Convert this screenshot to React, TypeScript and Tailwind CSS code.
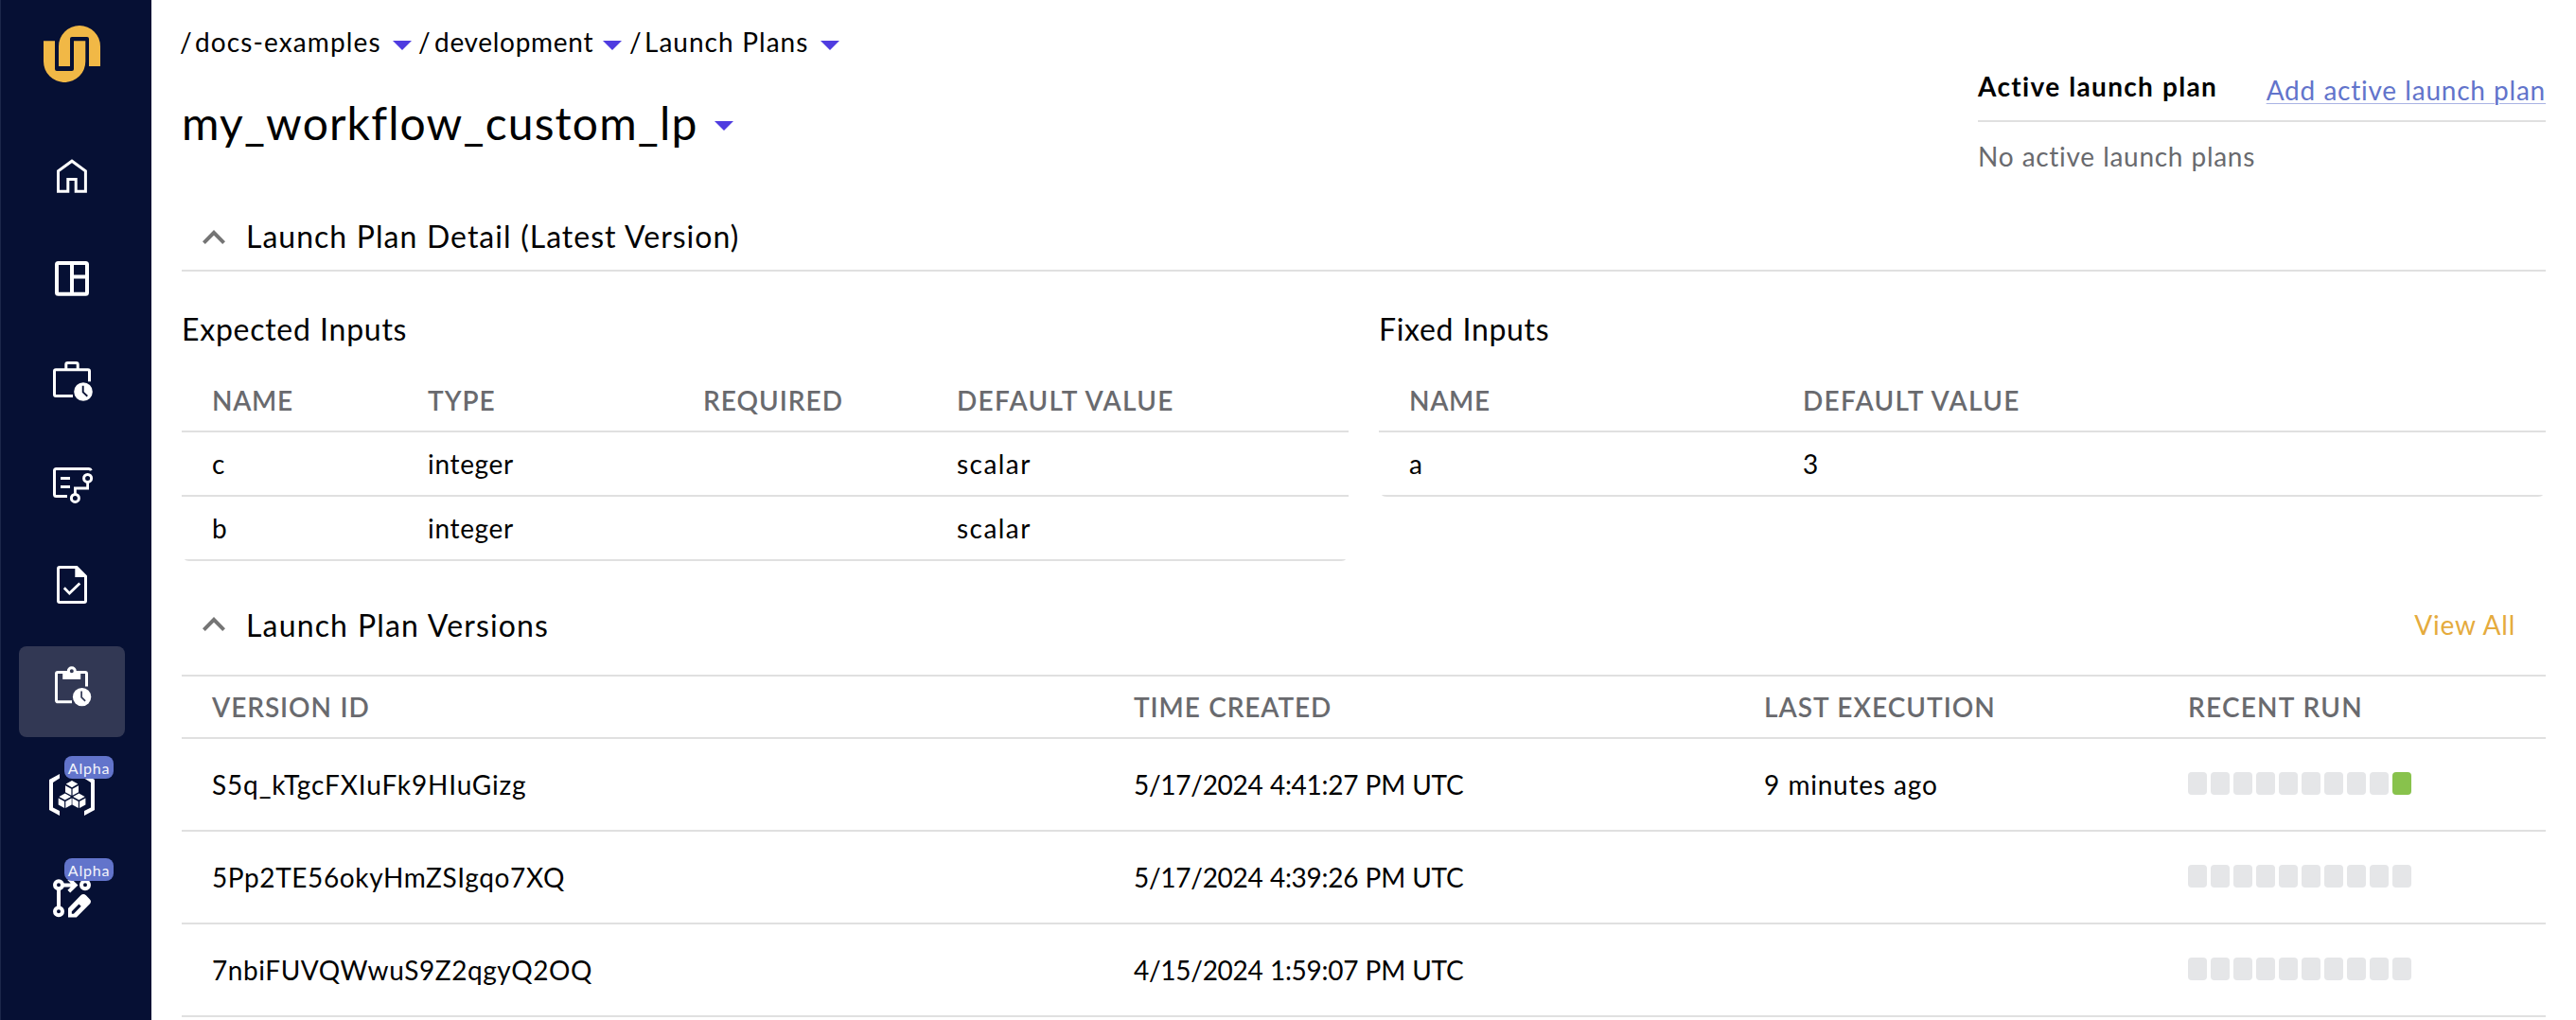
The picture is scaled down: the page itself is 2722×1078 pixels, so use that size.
import type { ReactNode } from "react";

function Logo() {
  return (
    <svg width="60" height="60" viewBox="0 0 60 60" fill="#f1b846">
      <path d="M16 43V22a22 22 0 0 1 44 0v21H48V14q0-2-2-2H30q-2 0-2 2v29z" />
      <path d="M0 16.3h12V46q0 2 2 2h16q2 0 2-2V16.3h12.3V38a22.1 22 0 0 1-44.3 0z" />
    </svg>
  );
}

const HomeIcon = (
  <path d="M41.5 59.2V37.8L56 27.2l14.4 10.6v21.4H60.2V46.5h-8.4v12.7z" strokeWidth="3" />
);

const DashboardIcon = (
  <>
    <rect x="40" y="27" width="32" height="32.7" rx="1.5" strokeWidth="4" />
    <path d="M56 27v32.7M56 41.6h16" strokeWidth="4" />
  </>
);

const BriefcaseIcon = (
  <>
    <path d="M57 59.5H39a1.5 1.5 0 0 1-1.5-1.5V33.3a1.5 1.5 0 0 1 1.5-1.5h34a1.5 1.5 0 0 1 1.5 1.5v11" strokeWidth="3" />
    <path d="M49.8 31.8v-5.6q0-1.7 1.7-1.7h9q1.7 0 1.7 1.7v5.6" strokeWidth="3" />
    <circle cx="68" cy="55" r="9.8" fill="#fff" stroke="none" />
    <path d="M67.7 48.8v6.6l4.6 4.3" stroke="#061034" strokeWidth="1.9" />
  </>
);

const WorkflowIcon = (
  <>
    <path d="M76.3 30.2q-.6-1.7-2.3-1.7H39.5q-2 0-2 2v25q0 2 2 2H51" strokeWidth="3" />
    <path d="M44 38.4h10M44 47.5h10" strokeWidth="3" />
    <circle cx="72.6" cy="38.4" r="4" strokeWidth="3" />
    <circle cx="59.4" cy="59.4" r="4" strokeWidth="3" />
    <path d="M72.6 43v6H59.4v6" strokeWidth="2.8" />
  </>
);

const TaskIcon = (
  <>
    <path d="M61 24.5H43a1.5 1.5 0 0 0-1.5 1.5v34a1.5 1.5 0 0 0 1.5 1.5h26a1.5 1.5 0 0 0 1.5-1.5V34z" strokeWidth="3" />
    <path d="M59.3 24v11h11.2v-2.5L62 24z" fill="#fff" stroke="none" />
    <path d="M47.8 46.2l5.6 5.9 10.9-10.6" strokeWidth="2.8" />
  </>
);

const LaunchPlanIcon = (
  <>
    <path d="M56 58.8H41a1.5 1.5 0 0 1-1.5-1.5V29a1.5 1.5 0 0 1 1.5-1.5h29a1.5 1.5 0 0 1 1.5 1.5v13.6" strokeWidth="3" />
    <path d="M46.2 26.5h19v8.4h-19z" fill="#fff" stroke="none" />
    <circle cx="55.8" cy="26.2" r="3.5" strokeWidth="3" fill="#323854" />
    <circle cx="66.6" cy="53.6" r="9.7" fill="#fff" stroke="none" />
    <path d="M66.1 47.6v6.2l4 4" stroke="#323854" strokeWidth="1.7" />
  </>
);

function Cube({ x, y }: { x: number; y: number }) {
  return (
    <g transform={`translate(${x} ${y})`}>
      <path d="M0 0l6.3 3.6L0 7.2l-6.3-3.6zM-7 5.2L-.6 8.7v7L-7 12.2zM7 5.2L.6 8.7v7L7 12.2z" />
    </g>
  );
}

const ArtifactsIcon = (
  <g fill="#fff" stroke="none">
    <path d="M43 27l-11 6v32l11 6v-5l-7-3.4V36l7-4.4zM69 27l11 6v32l-11 6v-5l7-3.4V36l-7-4.4z" />
    <Cube x={56} y={34} />
    <Cube x={48.7} y={47.4} />
    <Cube x={63.4} y={47.4} />
  </g>
);

const EditorIcon = (
  <>
    <g strokeWidth="4">
      <circle cx="42" cy="36.3" r="4" />
      <circle cx="70" cy="36.3" r="4" />
      <circle cx="42" cy="64.3" r="4" />
      <path d="M42 40v20M47 36.5h13M52.8 29.9l6.8 6.6-6.8 6.6" />
    </g>
    <path
      d="M52 61v9.4h8.8l13.9-13.9q2.6-2.6 0-5.2l-3.8-4q-2.8-2.6-5.6 0zM55.8 64.2l7.6-7.6 2.3 2.2-7.8 8h-2.1z"
      fill="#fff"
      fillRule="evenodd"
      stroke="none"
    />
  </>
);

const nav: { icon: ReactNode; active?: boolean; alpha?: boolean }[] = [
  { icon: HomeIcon },
  { icon: DashboardIcon },
  { icon: BriefcaseIcon },
  { icon: WorkflowIcon },
  { icon: TaskIcon },
  { icon: LaunchPlanIcon, active: true },
  { icon: ArtifactsIcon, alpha: true },
  { icon: EditorIcon, alpha: true },
];

function Sidebar() {
  return (
    <aside className="flex w-40 shrink-0 flex-col border-l border-[#1c274a] bg-[#061034] pt-[27px]">
      <div className="ml-[45px]">
        <Logo />
      </div>
      <nav className="mt-14 ml-[19px] flex w-28 flex-col gap-3">
        {nav.map((item, i) => (
          <div key={i} className={item.active ? "relative h-24 rounded-lg bg-[#323854]" : "relative h-24"}>
            <svg width="112" height="96" viewBox="0 0 112 96" fill="none" stroke="#fff">
              {item.icon}
            </svg>
            {item.alpha && (
              <span className="absolute top-2 left-12 h-6 w-[52px] rounded-lg bg-[#6274cb] text-center text-base leading-[26px] tracking-[0.05em] text-[#f3f4fb]">
                Alpha
              </span>
            )}
          </div>
        ))}
      </nav>
    </aside>
  );
}

function Caret({ className }: { className: string }) {
  return (
    <svg width="20" height="10" viewBox="0 0 20 10" fill="#4f3ce0" className={className}>
      <path d="M0 0h20L10 10z" />
    </svg>
  );
}

function Chevron() {
  return (
    <svg width="24" height="15" viewBox="0 0 24 15" fill="#757575" className="mr-[22px]">
      <path d="M12 0l12 12.2L21.2 15 12 5.8 2.8 15 0 12.2z" />
    </svg>
  );
}

function RecentRuns({ success }: { success: boolean }) {
  return (
    <div className="-mt-0.5 flex gap-1">
      {Array.from({ length: 10 }, (_, i) => (
        <span
          key={i}
          className={success && i === 9 ? "h-6 w-5 rounded bg-[#88c24c]" : "h-6 w-5 rounded bg-[#e5e6e8]"}
        />
      ))}
    </div>
  );
}

const expected = ["c", "b"];

const versions = [
  { id: "S5q_kTgcFXIuFk9HIuGizg", idClass: "tracking-[0.03em]", time: "5/17/2024 4:41:27 PM UTC", last: "9 minutes ago", success: true },
  { id: "5Pp2TE56okyHmZSIgqo7XQ", idClass: "tracking-[0.022em]", time: "5/17/2024 4:39:26 PM UTC", last: "", success: false },
  { id: "7nbiFUVQWwuS9Z2qgyQ2OQ", idClass: "tracking-[0.02em]", time: "4/15/2024 1:59:07 PM UTC", last: "", success: false },
];

const headRow = "border-b-2 border-[#e0e0e0] font-semibold text-[#696a6e]";
const expectedCols = "grid grid-cols-[228px_291px_268px_1fr] items-center pl-8";
const fixedCols = "grid grid-cols-[416px_1fr] items-center pl-8";
const versionCols = "grid grid-cols-[974px_666px_448px_1fr] items-center pl-8";

export default function App() {
  return (
    <div className="flex h-[1078px] w-[2722px] overflow-hidden bg-white font-[Lato,sans-serif] text-[28px] leading-10 [word-spacing:0.02em] whitespace-nowrap text-black">
      <Sidebar />
      <main className="flex min-w-0 flex-1 flex-col px-8">
        <header className="flex h-[215px] justify-between">
          <div className="pt-[23px]">
            <div className="mt-px flex h-10 items-center">
              <span className="-ml-0.5 w-4">/</span>
              <span className="w-[197px] tracking-[0.04em]">docs-examples</span>
              <Caret className="mt-[7px] mr-[7px] ml-3" />
              <span className="w-[17px]">/</span>
              <span className="w-[167px] tracking-[0.025em]">development</span>
              <Caret className="mt-[7px] mr-[8px] ml-[11px]" />
              <span className="w-4">/</span>
              <span className="w-[174px] tracking-[0.036em]">Launch Plans</span>
              <Caret className="mt-[7px] ml-3" />
            </div>
            <div className="mt-8 flex h-16 items-center">
              <h1 className="mt-[3px] w-[545px] text-[48px] leading-[64px] tracking-[0.024em]">my_workflow_custom_lp</h1>
              <Caret className="mt-[9px] ml-[18px]" />
            </div>
          </div>
          <div className="w-[600px] pt-[71px]">
            <div className="flex h-[58px] justify-between border-b-2 border-[#e0e0e0]">
              <h2 className="font-bold tracking-[0.048em]">Active launch plan</h2>
              <a className="mt-1 tracking-[0.027em] text-[#6274cb] underline decoration-[#a9b3e4] decoration-1 underline-offset-[3px]">
                Add active launch plan
              </a>
            </div>
            <p className="mt-4 tracking-[0.025em] text-[#696a6e]">No active launch plans</p>
          </div>
        </header>

        <div className="flex h-[72px] items-center border-b-2 border-[#e0e0e0] pl-[22px]">
          <Chevron />
          <h2 className="text-[32px] leading-[48px] tracking-[0.031em]">Launch Plan Detail (Latest Version)</h2>
        </div>

        <div className="flex h-[306px] items-start gap-8 pt-[37px]">
          <section className="w-[1233px] overflow-hidden rounded-b-lg">
            <h3 className="text-[32px] leading-[48px] tracking-[0.023em]">Expected Inputs</h3>
            <div className={`mt-[19px] h-[66px] ${expectedCols} ${headRow}`}>
              <span className="tracking-[0.024em]">NAME</span>
              <span className="tracking-[0.036em]">TYPE</span>
              <span className="tracking-[0.036em]">REQUIRED</span>
              <span className="tracking-[0.046em]">DEFAULT VALUE</span>
            </div>
            {expected.map((name) => (
              <div key={name} className={`h-[68px] border-b-2 border-[#e0e0e0] ${expectedCols}`}>
                <span>{name}</span>
                <span className="tracking-[0.024em]">integer</span>
                <span />
                <span className="tracking-[0.052em]">scalar</span>
              </div>
            ))}
          </section>
          <section className="w-[1233px] overflow-hidden rounded-b-lg">
            <h3 className="text-[32px] leading-[48px] tracking-[0.021em]">Fixed Inputs</h3>
            <div className={`mt-[19px] h-[66px] ${fixedCols} ${headRow}`}>
              <span className="tracking-[0.024em]">NAME</span>
              <span className="tracking-[0.046em]">DEFAULT VALUE</span>
            </div>
            <div className={`h-[68px] border-b-2 border-[#e0e0e0] ${fixedCols}`}>
              <span>a</span>
              <span>3</span>
            </div>
          </section>
        </div>

        <div className="flex h-[120px] items-center pt-[13px] pr-8 pl-[22px]">
          <Chevron />
          <h2 className="mt-0.5 text-[32px] leading-[48px] tracking-[0.036em]">Launch Plan Versions</h2>
          <a className="ml-auto tracking-[0.027em] text-[#e5ab3d]">View All</a>
        </div>

        <section>
          <div className={`h-[68px] border-t-2 ${versionCols} ${headRow}`}>
            <span className="tracking-[0.033em]">VERSION ID</span>
            <span className="tracking-[0.032em]">TIME CREATED</span>
            <span className="tracking-[0.036em]">LAST EXECUTION</span>
            <span className="tracking-[0.043em]">RECENT RUN</span>
          </div>
          {versions.map((v) => (
            <div key={v.id} className={`h-[98px] border-b-2 border-[#e0e0e0] ${versionCols}`}>
              <span className={v.idClass}>{v.id}</span>
              <span className="tracking-[-0.01em]">{v.time}</span>
              <span className="tracking-[0.027em]">{v.last}</span>
              <RecentRuns success={v.success} />
            </div>
          ))}
        </section>
      </main>
    </div>
  );
}
